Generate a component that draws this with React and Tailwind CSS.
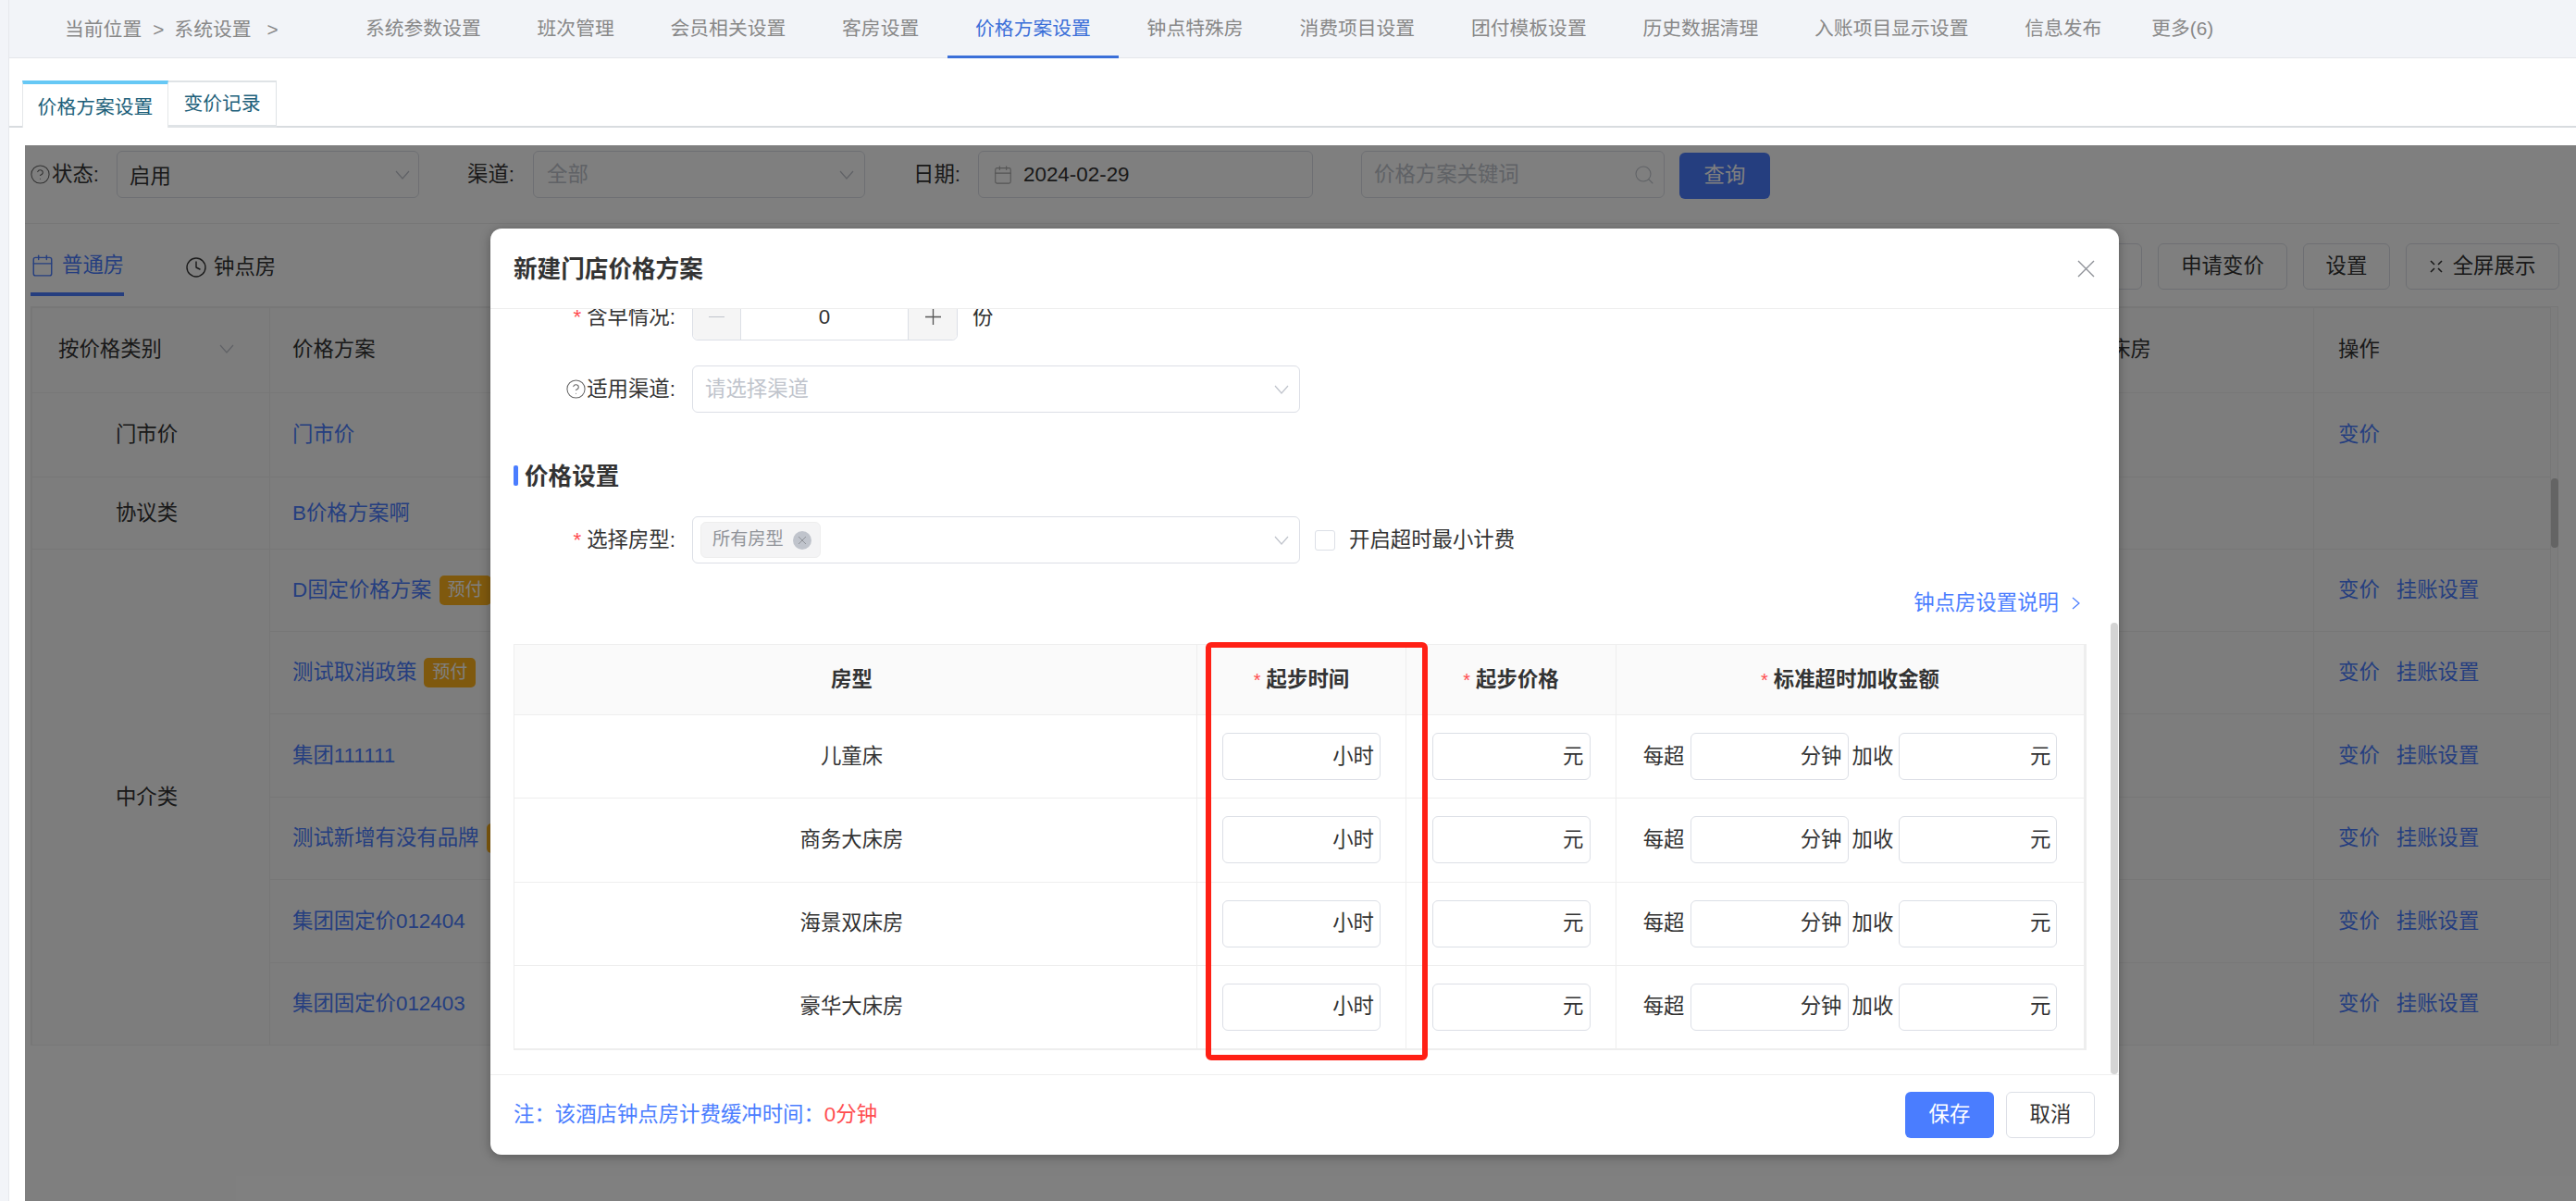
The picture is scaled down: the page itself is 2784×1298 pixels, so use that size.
import React from "react";
import { Calendar, Clock, Search, CircleHelp } from "lucide-react";

const Chevron = ({ className = "" }) => (
  <svg className={className} width="16" height="10" viewBox="0 0 16 10" fill="none" stroke="#c0c4cc" strokeWidth="1.2">
    <path d="M1 1l7 8 7-8" />
  </svg>
);

const navItems = ["系统参数设置", "班次管理", "会员相关设置", "客房设置", "价格方案设置", "钟点特殊房", "消费项目设置", "团付模板设置", "历史数据清理", "入账项目显示设置", "信息发布"];

const Badge = () => (
  <span className="ml-[8px] inline-flex h-[32px] w-[56px] shrink-0 items-center justify-center rounded-[5px] bg-[#ffb31c] text-[19px] text-white">预付</span>
);

const bgRows = [
  { h: "h-[91px]", cat: "门市价", name: "门市价", ops: 1 },
  { h: "h-[78px]", cat: "协议类", name: "B价格方案啊", ops: 0 },
  { h: "h-[89px]", cat: "中介类", span: 6, name: "D固定价格方案", badge: true, ops: 2 },
  { h: "h-[89px]", name: "测试取消政策", badge: true, ops: 2 },
  { h: "h-[90px]", name: "集团111111", ops: 2 },
  { h: "h-[89px]", name: "测试新增有没有品牌", badge: true, ops: 2 },
  { h: "h-[90px]", name: "集团固定价012404", ops: 2 },
  { h: "h-[89px]", name: "集团固定价012403", ops: 2 },
];

const rooms = ["儿童床", "商务大床房", "海景双床房", "豪华大床房"];

const UnitBox = ({ unit }) => (
  <div className="flex h-[51px] w-[171px] shrink-0 items-center justify-end rounded-[6px] border border-[#dcdfe6] bg-white pr-[6px] text-[22.4px] text-[#333]">{unit}</div>
);

const Star = () => <span className="mr-[6px] text-[20px] font-normal text-[#ff4d4f]">*</span>;

const Background = () => (
  <div className="ml-[17px] mt-[19px]">
    <div className="mr-[18px] flex h-[85px] items-start border-b border-[#eeeeee] pt-[6px]">
      <div className="flex h-[51px] w-[99px] items-center pl-[5px] text-[22.4px] text-[#333]">
        <CircleHelp size={23} strokeWidth={1.1} className="text-[#666]" />
        <span className="ml-[1px]">状态:</span>
      </div>
      <div className="flex h-[51px] w-[327px] items-center justify-between rounded-[6px] border border-[#dcdfe6] pl-[13px] pr-[9px] text-[22.4px] text-[#333]">
        <span className="pt-[5px]">启用</span>
        <Chevron />
      </div>
      <div className="flex h-[51px] w-[123px] items-center pl-[52px] text-[22.4px] text-[#333]">渠道:</div>
      <div className="flex h-[51px] w-[359px] items-center justify-between rounded-[6px] border border-[#dcdfe6] pl-[14px] pr-[11px] text-[22.4px] text-[#c0c4cc]">
        <span>全部</span>
        <Chevron />
      </div>
      <div className="flex h-[51px] w-[122px] items-center pl-[52px] text-[22.4px] text-[#333]">日期:</div>
      <div className="flex h-[51px] w-[362px] items-center rounded-[6px] border border-[#dcdfe6] pl-[15px] text-[22.4px] text-[#333]">
        <Calendar size={22} strokeWidth={1.2} className="text-[#aaa]" />
        <span className="ml-[11px]">2024-02-29</span>
      </div>
      <div className="ml-[52px] flex h-[51px] w-[328px] items-center justify-between rounded-[6px] border border-[#dcdfe6] pl-[13px] pr-[9px] text-[22.4px] text-[#c0c4cc]">
        <span>价格方案关键词</span>
        <Search size={24} strokeWidth={1.1} className="text-[#c0c4cc]" />
      </div>
      <div className="ml-[16px] mt-[2px] flex h-[50px] w-[98px] items-center justify-center rounded-[6px] bg-[#4a7dff] text-[22.4px] text-white">查询</div>
    </div>

    <div className="flex h-[89px] items-start justify-between pr-[18px]">
      <div className="flex text-[22.4px]">
        <div className="ml-[6px] flex h-[78px] w-[101px] items-center gap-[8px] whitespace-nowrap border-b-4 border-[#4a7dff] pt-[16px] text-[#4a7dff]">
          <Calendar size={26} strokeWidth={1.3} className="shrink-0" />
          <span>普通房</span>
        </div>
        <div className="ml-[66px] flex h-[78px] items-center gap-[7px] whitespace-nowrap pt-[16px] text-[#333]">
          <Clock size={24} strokeWidth={1.4} className="shrink-0" />
          <span>钟点房</span>
        </div>
      </div>
      <div className="mt-[21px] flex gap-[17px] text-[22.4px] text-[#333]">
        <div className="flex h-[50px] w-[139px] items-center justify-end rounded-[6px] border border-[#dcdfe6] pr-[25px]">批量变价</div>
        <div className="flex h-[50px] w-[140px] items-center justify-center rounded-[6px] border border-[#dcdfe6]">申请变价</div>
        <div className="flex h-[50px] w-[94px] items-center justify-center rounded-[6px] border border-[#dcdfe6]">设置</div>
        <div className="flex h-[50px] w-[166px] items-center justify-center gap-[11px] rounded-[6px] border border-[#dcdfe6]">
          <svg width="14" height="14" viewBox="0 0 14 14" fill="none" stroke="#333" strokeWidth="1.6">
            <path d="M1 1l4 4M13 1L9 5M1 13l4-4M13 13L9 9" />
          </svg>
          <span>全屏展示</span>
        </div>
      </div>
    </div>

    <div className="ml-[6px] flex h-[799px] w-[2732px] border border-[#eeeeee] bg-[#fbfbfb]">
      <table className="h-[797px] w-[2722px] table-fixed border-collapse text-[22.4px] text-[#333]">
        <colgroup>
          <col className="w-[257px]" />
          <col className="w-[1897px]" />
          <col className="w-[312px]" />
          <col className="w-[256px]" />
        </colgroup>
        <thead>
          <tr className="h-[92px]">
            <th className="border border-[#eeeeee] pb-[2px] pl-[28px] pr-[38px] text-left font-normal">
              <div className="flex items-center justify-between">
                <span>按价格类别</span>
                <Chevron />
              </div>
            </th>
            <th className="border border-[#eeeeee] pb-[2px] pl-[24px] text-left font-normal">价格方案</th>
            <th className="border border-[#eeeeee] pb-[2px] pl-[24px] text-left font-normal">豪华大床房</th>
            <th className="border border-[#eeeeee] pb-[2px] pl-[26px] text-left font-normal">操作</th>
          </tr>
        </thead>
        <tbody>
          {bgRows.map((r) => (
            <tr key={r.name} className={r.h}>
              {r.cat && (
                <td rowSpan={r.span || 1} className="border border-[#eeeeee] pr-[9px] text-center">{r.cat}</td>
              )}
              <td className="border border-[#eeeeee] pl-[24px]">
                <div className="flex items-center whitespace-nowrap text-[#4a7dff]">
                  <span>{r.name}</span>
                  {r.badge && <Badge />}
                </div>
              </td>
              <td className="border border-[#eeeeee]"></td>
              <td className="border border-[#eeeeee] pl-[26px] text-[#4a7dff]">
                {r.ops > 0 && <span>变价</span>}
                {r.ops > 1 && <span className="ml-[18px]">挂账设置</span>}
              </td>
            </tr>
          ))}
        </tbody>
      </table>
      <div className="flex-1">
        <div className="mt-[185px] h-[75px] w-[8px] rounded-[4px] bg-[#c8c8c8]"></div>
      </div>
    </div>
  </div>
);

const Modal = () => (
  <div className="absolute left-[530px] top-[247px] flex h-[1001px] w-[1760px] flex-col overflow-hidden rounded-[12px] bg-white shadow-[0_2px_12px_rgba(0,0,0,0.3)]">
    <div className="flex h-[87px] shrink-0 items-center justify-between border-b border-[#eeeeee] pl-[25px] pr-[26px]">
      <span className="pt-[2px] text-[25.6px] font-bold text-[#333]">新建门店价格方案</span>
      <svg width="19" height="19" viewBox="0 0 19 19" fill="none" stroke="#909399" strokeWidth="1.4">
        <path d="M1 1l17 17M18 1L1 18" />
      </svg>
    </div>

    <div className="relative flex-1 overflow-hidden pl-[25px] text-[22.4px] text-[#333]">
      <div className="-mt-[17px]">
        <div className="flex h-[51px] items-center">
          <div className="w-[175px] text-right"><span className="mr-[6px] text-[#ff4d4f]">*</span>含早情况:</div>
          <div className="ml-[18px] flex h-[51px] w-[287px] rounded-[6px] border border-[#dcdfe6]">
            <div className="flex w-[52px] items-center justify-center rounded-l-[6px] border-r border-[#dcdfe6] bg-[#f5f5f5]">
              <div className="h-[1.5px] w-[17px] bg-[#c0c4cc]"></div>
            </div>
            <div className="flex flex-1 items-center justify-center">0</div>
            <div className="flex w-[53px] items-center justify-center rounded-r-[6px] border-l border-[#dcdfe6] bg-[#f5f5f5]">
              <svg width="17" height="17" viewBox="0 0 17 17" stroke="#555" strokeWidth="1.3"><path d="M8.5 0v17M0 8.5h17" /></svg>
            </div>
          </div>
          <span className="ml-[16px]">份</span>
        </div>

        <div className="mt-[27px] flex h-[51px] items-center">
          <div className="flex w-[175px] items-center justify-end">
            <CircleHelp size={23} strokeWidth={1.1} className="text-[#666]" />
            <span>适用渠道:</span>
          </div>
          <div className="ml-[18px] flex h-[51px] w-[657px] items-center justify-between rounded-[6px] border border-[#dcdfe6] pl-[13px] pr-[11px] text-[#c0c4cc]">
            <span>请选择渠道</span>
            <Chevron />
          </div>
        </div>

        <div className="mt-[57px] flex h-[22px] items-center">
          <div className="h-[22px] w-[5px] rounded-[2px] bg-[#4a7dff]"></div>
          <span className="ml-[7px] pt-[2px] text-[25.6px] font-bold text-[#333]">价格设置</span>
        </div>

        <div className="mt-[33px] flex h-[51px] items-center">
          <div className="w-[175px] text-right"><span className="mr-[6px] text-[#ff4d4f]">*</span>选择房型:</div>
          <div className="ml-[18px] flex h-[51px] w-[657px] items-center justify-between rounded-[6px] border border-[#dcdfe6] pl-[8px] pr-[11px]">
            <div className="flex h-[39px] w-[130px] items-center rounded-[6px] border border-[#eeeeee] bg-[#f4f4f5] pl-[12px] text-[19.2px] text-[#909399]">
              <span>所有房型</span>
              <span className="ml-[10px] flex h-[20px] w-[20px] items-center justify-center rounded-full bg-[#c0c4cc]">
                <svg width="10" height="10" viewBox="0 0 10 10" stroke="#909399" strokeWidth="1"><path d="M1 1l8 8M9 1L1 9" /></svg>
              </span>
            </div>
            <Chevron />
          </div>
          <div className="ml-[16px] h-[22px] w-[22px] rounded-[3px] border border-[#dcdfe6]"></div>
          <span className="ml-[15px]">开启超时最小计费</span>
        </div>

        <div className="mt-[29px] flex h-[28px] items-center justify-end pr-[42px] text-[#4a7dff]">
          <span>钟点房设置说明</span>
          <svg className="ml-[14px]" width="9" height="14" viewBox="0 0 9 14" fill="none" stroke="#4a7dff" strokeWidth="1.2"><path d="M1 1l7 6-7 6" /></svg>
        </div>

        <table className="mt-[30px] w-[1698px] table-fixed border-collapse border-b-2 border-r-[3px] border-[#eeeeee]">
          <colgroup>
            <col className="w-[738px]" />
            <col className="w-[226px]" />
            <col className="w-[227px]" />
            <col className="w-[507px]" />
          </colgroup>
          <thead>
            <tr className="h-[76px] bg-[#fafafa] font-bold">
              <th className="border border-[#eeeeee] pr-[8px] font-bold">房型</th>
              <th className="border border-[#eeeeee] font-bold"><Star />起步时间</th>
              <th className="border border-[#eeeeee] font-bold"><Star />起步价格</th>
              <th className="border border-[#eeeeee] font-bold"><Star />标准超时加收金额</th>
            </tr>
          </thead>
          <tbody>
            {rooms.map((room) => (
              <tr key={room} className="h-[90.25px]">
                <td className="border border-[#eeeeee] pr-[8px] text-center">{room}</td>
                <td className="border border-[#eeeeee]"><div className="flex justify-center"><UnitBox unit="小时" /></div></td>
                <td className="border border-[#eeeeee]"><div className="flex justify-center"><UnitBox unit="元" /></div></td>
                <td className="border border-[#eeeeee]">
                  <div className="flex items-center justify-center">
                    <span>每超</span>
                    <div className="ml-[6px]"><UnitBox unit="分钟" /></div>
                    <span className="ml-[4px]">加收</span>
                    <div className="ml-[6px]"><UnitBox unit="元" /></div>
                  </div>
                </td>
              </tr>
            ))}
          </tbody>
        </table>
      </div>
      <div className="absolute right-[1px] top-[339px] h-[488px] w-[8px] rounded-[4px] bg-[#d4d4d4]"></div>
    </div>

    <div className="flex h-[87px] shrink-0 items-center justify-between border-t border-[#eeeeee] pl-[25px] pr-[26px] text-[22.4px]">
      <div>
        <span className="text-[#4a7dff]">{"注\uFF1A该酒店钟点房计费缓冲时间\uFF1A"}</span>
        <span className="text-[#ff4d4f]">0分钟</span>
      </div>
      <div className="flex gap-[13px]">
        <div className="flex h-[50px] w-[96px] items-center justify-center rounded-[6px] bg-[#4a7dff] text-white">保存</div>
        <div className="flex h-[50px] w-[96px] items-center justify-center rounded-[6px] border border-[#dcdfe6] text-[#333]">取消</div>
      </div>
    </div>

    <div className="absolute left-[773px] top-[447px] h-[452px] w-[240px] rounded-[6px] border-[6px] border-[#ff2015]"></div>
  </div>
);

export default function App() {
  return (
    <div className="relative flex h-[1298px] w-[2784px] overflow-hidden bg-white font-['Liberation_Sans','Noto_Sans_CJK_SC',sans-serif]">
      <div className="w-[10px] shrink-0 border-r border-[#e6e8ec] bg-[#f2f4f8]"></div>
      <div className="min-w-0 flex-1">
        <div className="flex h-[63px] items-start border-b border-[#e4e6ea] bg-[#f2f4f8] text-[20.8px] text-[#888]">
          <div className="flex h-[64px] w-[354.6px] shrink-0 items-center pl-[60px]">
            <span>当前位置</span>
            <span className="ml-[12px]">&gt;</span>
            <span className="ml-[11px]">系统设置</span>
            <span className="ml-[17px]">&gt;</span>
          </div>
          {navItems.map((item, i) => (
            <div
              key={item}
              className={i === 4
                ? "flex h-[63px] shrink-0 items-center border-b-[3px] border-[#3b6fd8] px-[30.4px] pt-[1px] text-[#3b6fd8]"
                : "flex h-[63px] shrink-0 items-center border-b-[3px] border-transparent px-[30.4px] pt-[1px]"}
            >
              {item}
            </div>
          ))}
          <div className="-ml-[7px] flex h-[63px] shrink-0 items-center px-[30.4px] pt-[1px] pb-[3px]">更多(6)</div>
        </div>

        <div className="mt-[24px] flex h-[51px] items-start border-b-2 border-[#d8dcdf] text-[20.8px] text-[#1d5f7a]">
          <div className="ml-[14px] flex h-[51px] w-[158px] items-center justify-center border-x border-t-4 border-x-[#e4e7e9] border-t-[#66c8f5] bg-white pt-[2px]">价格方案设置</div>
          <div className="flex h-[51px] w-[117px] items-center justify-center border-b-[3px] border-r border-t-2 border-[#dfe3e6] bg-white">变价记录</div>
        </div>

        <Background />
      </div>

      <div className="absolute bottom-0 left-[27px] right-0 top-[157px] bg-black/50"></div>
      <Modal />
    </div>
  );
}
